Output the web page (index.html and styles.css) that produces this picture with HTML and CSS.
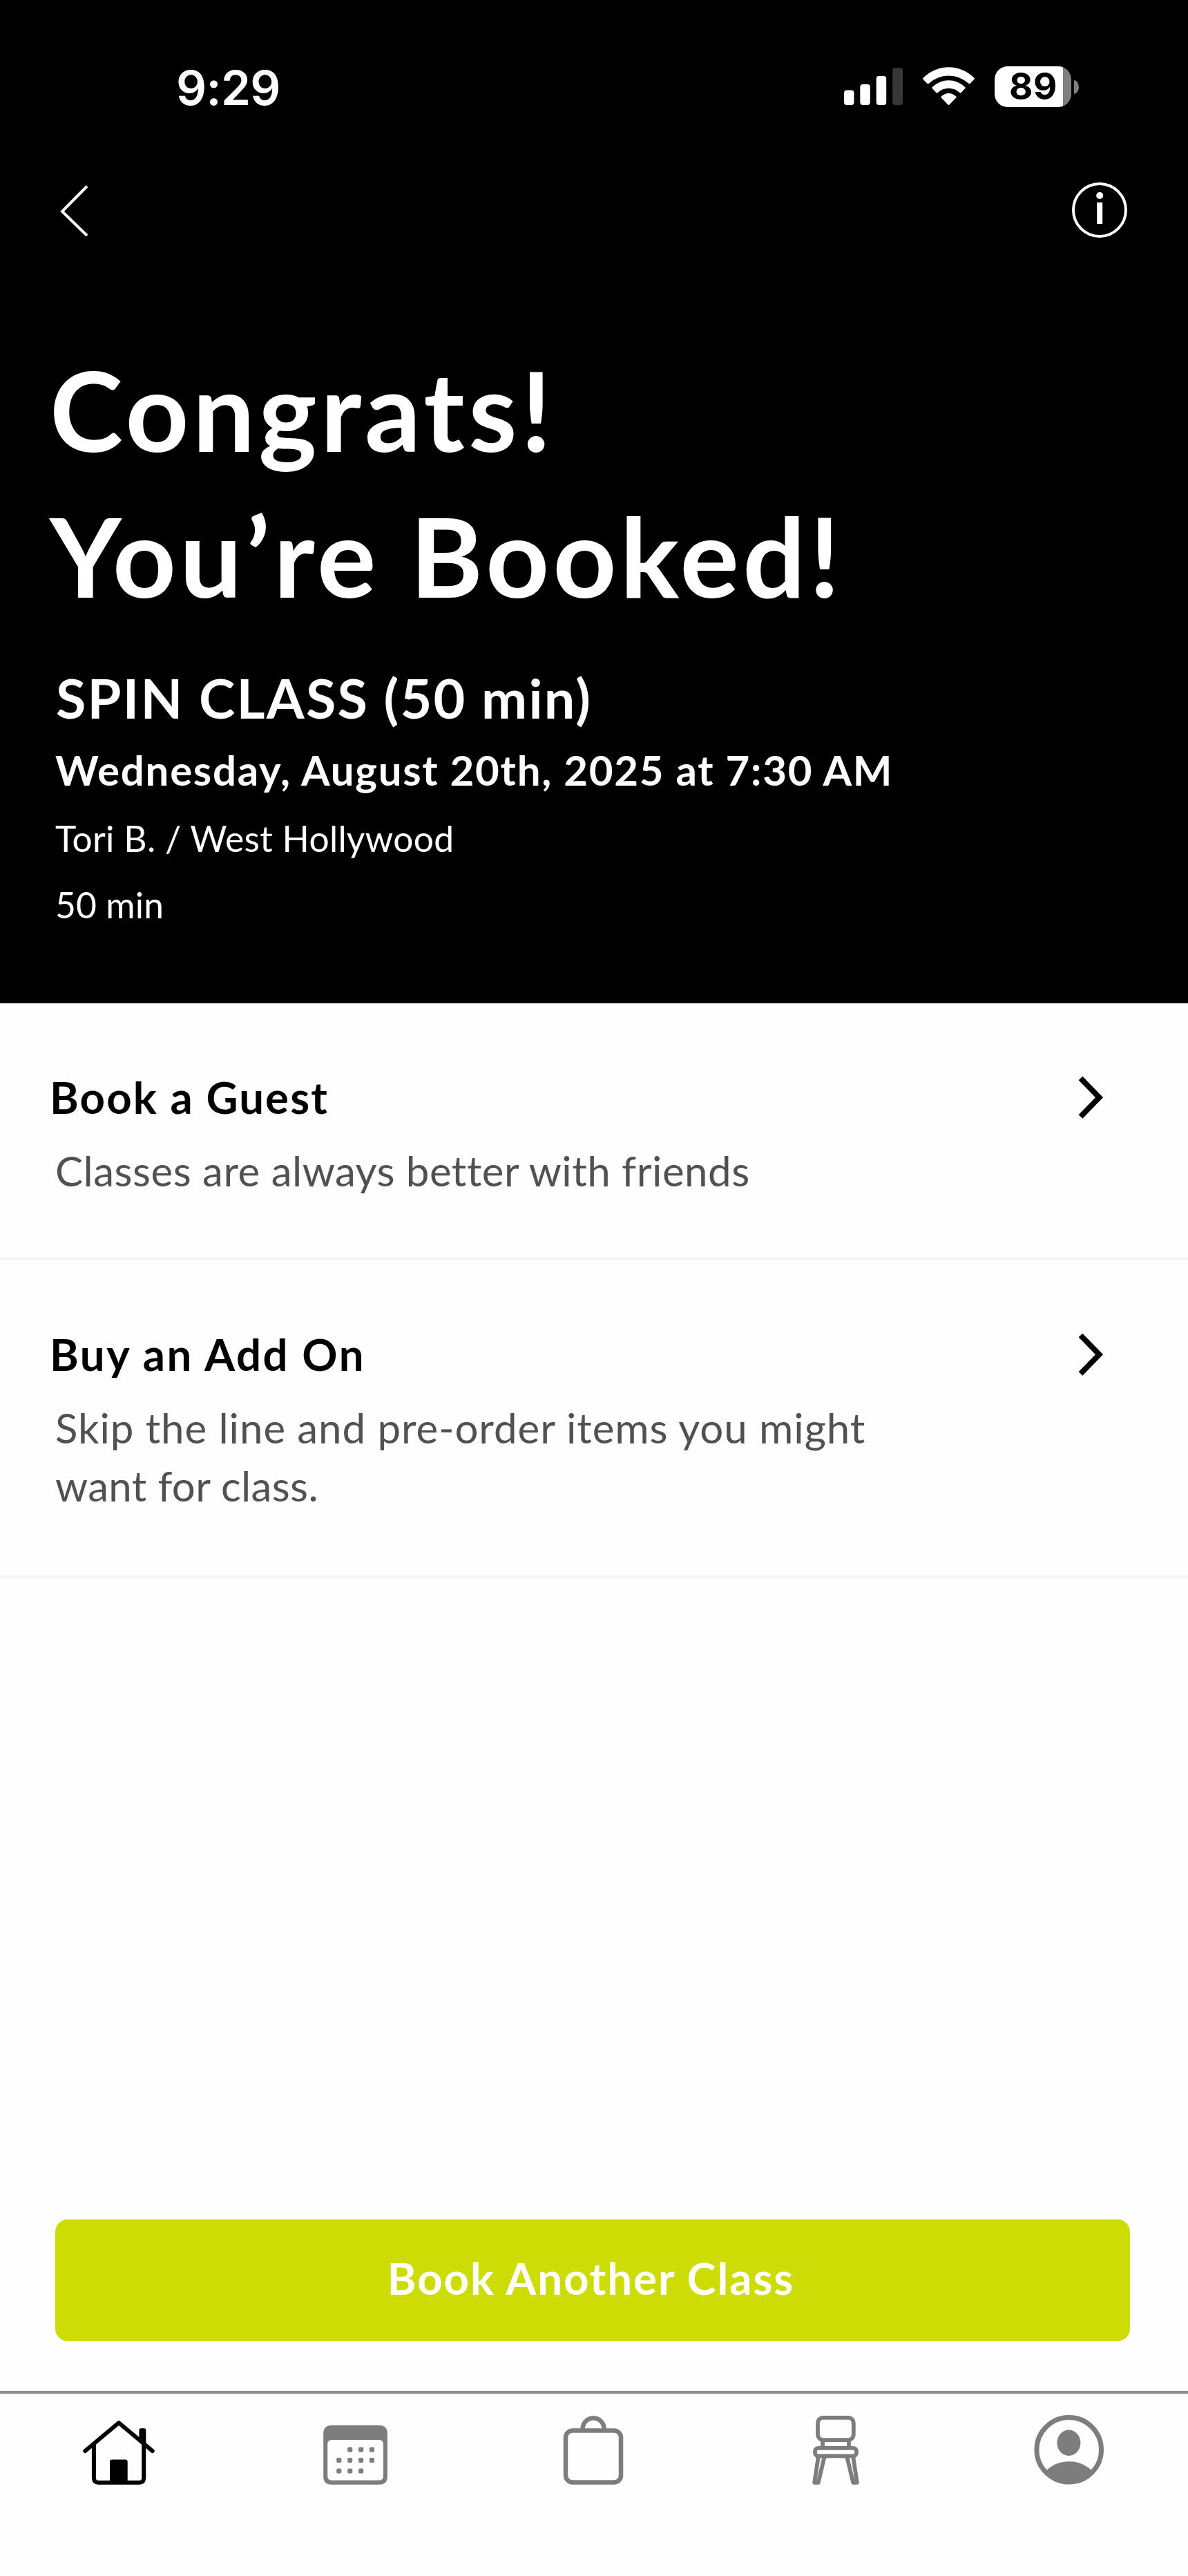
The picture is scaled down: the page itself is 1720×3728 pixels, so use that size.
FILE: index.html
```html
<!DOCTYPE html>
<html lang="en">
<head>
<meta charset="utf-8">
<title>You’re Booked</title>
<link rel="stylesheet" href="styles.css">
</head>
<body>
<div class="screen">
  <header class="hero">
    <div class="status">
      <span class="status-time">9:29</span>
      <div class="status-icons">
        <svg class="signal" viewBox="0 0 189 59" aria-hidden="true">
          <g fill="#fff">
            <rect x="0" y="34.5" width="14.5" height="21.5" rx="4"/>
            <rect x="23.3" y="26" width="14.5" height="30" rx="4"/>
            <rect x="46.7" y="14" width="14.5" height="42" rx="4"/>
          </g>
          <rect x="70.2" y="2.3" width="14.8" height="53.7" rx="4" fill="#373737"/>
          <g fill="#fff">
            <path d="M114.3 18.4Q113.6 17.6 114.6 16.8Q130.5 1.3 151.5 1.3T188.4 16.8Q189.4 17.6 188.7 18.4L182.4 25Q181.5 25.8 180.5 25Q168 13.5 151.5 13.5T122.5 25Q121.5 25.8 120.6 25Z"/>
            <path d="M127.6 31.8Q126.8 31 127.6 30.2Q138.5 20.3 151.5 20.3T175.4 30.2Q176.2 31 175.4 31.8L169.5 38.2Q168.6 39 167.6 38.2Q160.5 31.8 151.5 31.8T135.4 38.2Q134.4 39 133.5 38.2Z"/>
            <path d="M140.6 45.3Q139.8 44.5 140.6 43.7Q145.5 39 151.5 39T162.4 43.7Q163.2 44.5 162.4 45.3L152.5 55.5Q151.5 56.5 150.5 55.5Z"/>
          </g>
        </svg>
        <div class="battery">89</div>
        <div class="battery-tip"></div>
      </div>
    </div>
    <nav class="nav">
      <svg class="nav-back" viewBox="0 0 44 76" aria-label="Back"><path d="M41 3.5 5 40 41 75" fill="none" stroke="#fff" stroke-width="4"/></svg>
      <svg class="nav-info" viewBox="0 0 82 82" aria-label="Info"><circle cx="41" cy="41" r="38" fill="none" stroke="#fff" stroke-width="4"/><circle cx="41.2" cy="20" r="5" fill="#fff"/><path d="M37.200 30h8v31h-8z" fill="#fff"/></svg>
    </nav>
    <div class="hero-text">
      <h1 class="headline">Congrats!<br>You’re Booked!</h1>
      <h2 class="class-name">SPIN CLASS (50 min)</h2>
      <p class="class-date">Wednesday, August 20th, 2025 at 7:30 AM</p>
      <p class="class-place">Tori B. / West Hollywood</p>
      <p class="class-length">50 min</p>
    </div>
  </header>

  <main class="options">
    <a class="option">
      <div>
        <h3 class="option-title">Book a Guest</h3>
        <p class="option-text">Classes are always better with friends</p>
      </div>
      <svg class="chevron" viewBox="0 0 42 68" aria-hidden="true"><path d="M4.500 6.500 31.500 34.200 4.500 62" fill="none" stroke="#000" stroke-width="8"/></svg>
    </a>
    <a class="option option-tall">
      <div>
        <h3 class="option-title option-title-wide">Buy an Add On</h3>
        <p class="option-text"><span class="line-wide">Skip the line and pre-order items you might</span><br><span class="line-tight">want for class.</span></p>
      </div>
      <svg class="chevron" viewBox="0 0 42 68" aria-hidden="true"><path d="M4.500 6.500 31.500 34.200 4.500 62" fill="none" stroke="#000" stroke-width="8"/></svg>
    </a>
  </main>

  <div class="action"><button class="book">Book Another Class</button></div>

  <footer class="tabs">
    <svg class="tab" viewBox="0 0 344 264" aria-label="Home">
      <g fill="none" stroke="#000" stroke-width="6" stroke-linecap="round" stroke-linejoin="round">
        <path d="M123.300 83 172 42.300 220.700 83"/>
        <path d="M135.900 73V122Q135.900 128.700 142 128.700H202Q208.200 128.700 208.200 122V73"/>
      </g>
      <path d="M159 128V98.500Q159 95.600 162 95.600H181.700Q184.700 95.600 184.700 98.500V128ZM201.400 67V53.500Q201.400 50.300 204 50.300H208.700Q211.300 50.300 211.300 53.500V76Z"/>
    </svg>
    <svg class="tab tab-grey" viewBox="344 0 344 264" aria-label="Calendar">
      <path fill-rule="evenodd" d="M480 46H549Q560.900 46 560.900 58V120Q560.900 131.700 549 131.700H480Q468.200 131.700 468.200 120V58Q468.200 46 480 46ZM480.500 67Q474.200 67 474.200 73V119.500Q474.200 125.500 480.500 125.500H548.500Q554.900 125.500 554.900 119.500V73Q554.900 67 548.500 67Z"/>
      <g>
        <rect x="503.100" y="77.500" width="7.200" height="7.200" rx="2"/><rect x="519" y="77.500" width="7.200" height="7.200" rx="2"/><rect x="534.800" y="77.500" width="7.200" height="7.200" rx="2"/>
        <rect x="487.200" y="92.900" width="7.200" height="7.200" rx="2"/><rect x="503.100" y="92.900" width="7.200" height="7.200" rx="2"/><rect x="519" y="92.900" width="7.200" height="7.200" rx="2"/><rect x="534.800" y="92.900" width="7.200" height="7.200" rx="2"/>
        <rect x="487.200" y="108.400" width="7.200" height="7.200" rx="2"/><rect x="503.100" y="108.400" width="7.200" height="7.200" rx="2"/><rect x="519" y="108.400" width="7.200" height="7.200" rx="2"/>
      </g>
    </svg>
    <svg class="tab tab-outline" viewBox="688 0 344 264" aria-label="Shop">
      <g stroke-width="6.500">
        <rect x="819" y="53.600" width="80" height="74.900" rx="10"/>
        <path d="M843.600 52.500V51A15.500 15.500 0 0 1 874.600 51V52.500"/>
      </g>
    </svg>
    <svg class="tab tab-outline" viewBox="1032 0 344 264" aria-label="Studio">
      <g stroke-width="5.800" stroke-linejoin="round">
        <rect x="1184" y="34.900" width="51.800" height="32.200" rx="7.500"/>
        <path d="M1191 68V77M1229 68V77"/>
        <rect x="1180" y="78.900" width="60" height="11.400" rx="4.500"/>
        <path d="M1184.700 92 1179.200 128.800H1184.800L1193.400 92M1235.300 92 1240.800 128.800H1235.200L1226.400 92"/>
      </g>
    </svg>
    <svg class="tab tab-grey" viewBox="1376 0 344 264" aria-label="Profile">
      <circle cx="1547.700" cy="81.300" r="46.800" fill="none" stroke="#7d7d7d" stroke-width="7"/>
      <ellipse cx="1547.400" cy="71.300" rx="17" ry="18.700"/>
      <path d="M1514 112Q1528 98.200 1547.700 98.200T1581.400 112Q1568 131 1547.700 131T1514 112Z"/>
    </svg>
  </footer>
</div>
</body>
</html>
```

FILE: styles.css
```css
* { box-sizing: border-box; }

body {
  margin: 0;
  background: #fefefe;
  font-family: Lato, "Open Sans", sans-serif;
}

h1, h2, h3, p { margin: 0; }

.screen {
  width: 1720px;
  height: 3728px;
  display: flex;
  flex-direction: column;
  background: #fefefe;
}

/* Black booking summary */
.hero {
  height: 1452px;
  background: #000;
  color: #fff;
}

.status {
  height: 208px;
  padding: 87px 158px 0 255px;
  display: flex;
  justify-content: space-between;
  align-items: flex-start;
  font-family: Inter, sans-serif;
}

.status-time {
  font-size: 69px;
  font-weight: 600;
  line-height: 80px;
  letter-spacing: -0.6px;
}

.status-icons {
  display: flex;
  align-items: center;
  margin-top: 9px;
}

.signal {
  width: 189px;
  height: 59px;
  margin-right: 29px;
}

.battery {
  width: 111px;
  height: 59px;
  padding-left: 21px;
  border-radius: 19px;
  background: linear-gradient(90deg, #fff 99px, #7f7f7f 99px);
  color: #000;
  font-size: 53px;
  font-weight: 700;
  line-height: 59px;
  letter-spacing: 0.5px;
}

.battery-tip {
  width: 7px;
  height: 20px;
  margin-left: 4px;
  border-radius: 0 7px 7px 0 / 0 10px 10px 0;
  background: #7f7f7f;
}

.nav {
  height: 192px;
  padding: 0 87px 0 85px;
  display: flex;
  justify-content: space-between;
  align-items: center;
}

.nav-back { width: 44px; height: 76px; }
.nav-info { width: 82px; height: 82px; }

.hero-text { padding: 87px 80px 0; }

.headline {
  margin-left: -8px;
  font-size: 160px;
  font-weight: 700;
  line-height: 211.4px;
  letter-spacing: 5.3px;
}

.class-name {
  margin: 52px 0 0 1px;
  font-size: 79px;
  font-weight: 700;
  line-height: 96px;
  letter-spacing: 2.25px;
}

.class-date {
  margin-top: 16px;
  font-size: 60px;
  font-weight: 700;
  line-height: 80px;
  letter-spacing: 1.7px;
}

.class-place,
.class-length {
  margin-top: 19px;
  font-size: 51.5px;
  line-height: 80px;
  letter-spacing: 0.33px;
}

.class-length {
  margin-top: 16px;
  letter-spacing: 0.1px;
}

/* Follow-up options */
.option {
  height: 372px;
  padding: 96px 118px 0 80px;
  display: flex;
  justify-content: space-between;
  align-items: flex-start;
  border-bottom: 4px solid #f4f4f4;
}

.option-tall { height: 460px; }

.option-title {
  margin-left: -8px;
  color: #000;
  font-size: 63.5px;
  font-weight: 700;
  line-height: 80px;
  letter-spacing: 2.15px;
}

.option-title-wide { letter-spacing: 2.6px; }

.option-text {
  margin-top: 24px;
  color: #515151;
  font-size: 60px;
  line-height: 84px;
  letter-spacing: 0.51px;
}

.line-wide { letter-spacing: 0.95px; }
.line-tight { letter-spacing: 0.38px; }

.chevron {
  width: 42px;
  height: 68px;
  margin-top: 6px;
}

/* Primary action, pinned above the tab bar */
.action {
  margin-top: auto;
  padding: 0 84px 72px 80px;
}

.book {
  display: block;
  width: 100%;
  height: 176px;
  padding: 0 5px 7px 0;
  border: 0;
  border-radius: 18px;
  background: #cddc05;
  color: #fff;
  font-family: inherit;
  font-size: 63.5px;
  font-weight: 700;
  letter-spacing: 1.95px;
}

/* Tab bar */
.tabs {
  height: 268px;
  display: grid;
  grid-template-columns: repeat(5, 1fr);
  border-top: 4px solid #8c8c8c;
  box-shadow: inset 0 1px #d2d2d2;
}

.tab {
  width: 344px;
  height: 264px;
  fill: #000;
}

.tab-grey { fill: #7d7d7d; }

.tab-outline {
  fill: none;
  stroke: #7d7d7d;
}
```
